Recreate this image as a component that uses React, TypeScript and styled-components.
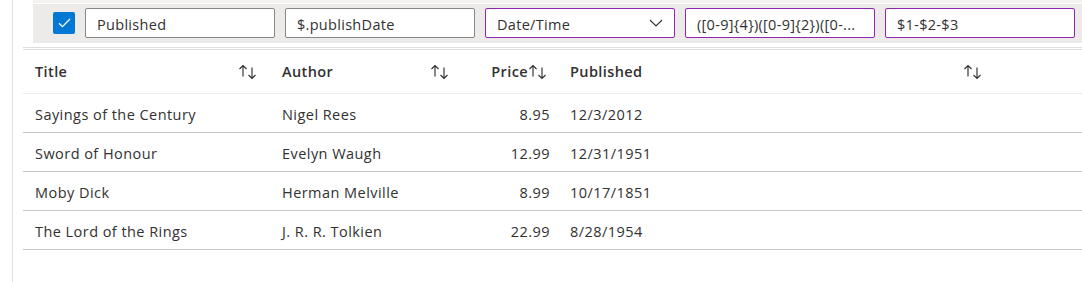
import React from 'react';
import styled, { createGlobalStyle } from 'styled-components';

const GlobalStyle = createGlobalStyle`
  body {
    margin: 0;
    background: #ffffff;
    font-family: 'Open Sans', 'Noto Sans', sans-serif;
    color: #323130;
  }
`;

type Book = { title: string; author: string; price: string; published: string };

const books: Book[] = [
  { title: 'Sayings of the Century', author: 'Nigel Rees', price: '8.95', published: '12/3/2012' },
  { title: 'Sword of Honour', author: 'Evelyn Waugh', price: '12.99', published: '12/31/1951' },
  { title: 'Moby Dick', author: 'Herman Melville', price: '8.99', published: '10/17/1851' },
  { title: 'The Lord of the Rings', author: 'J. R. R. Tolkien', price: '22.99', published: '8/28/1954' },
];

const SortIcon = () => (
  <svg width="20" height="16" viewBox="0 0 20 16" fill="none" stroke="#323130" strokeWidth="1.15">
    <path d="M5 1.5V12.5M1.5 5L5 1.5L8.5 5" />
    <path d="M14 3.5V14.5M10.5 11L14 14.5L17.5 11" />
  </svg>
);

const Chevron = () => (
  <svg width="14" height="8" viewBox="0 0 14 8" fill="none" stroke="#323130" strokeWidth="1.1">
    <path d="M1 1L7 7L13 1" />
  </svg>
);

const Check = () => (
  <svg width="13" height="10" viewBox="0 0 13 10" fill="none" stroke="#ffffff" strokeWidth="1.3">
    <path d="M1 5.2L4.4 8.6L12 1" />
  </svg>
);

const App: React.FC = () => {
  return (
    <Page>
      <GlobalStyle />
      <Gutter />
      <Content>
        <Toolbar>
          <CheckBox>
            <Check />
          </CheckBox>
          <Field>Published</Field>
          <Field>$.publishDate</Field>
          <Field accent>
            <span>Date/Time</span>
            <Chevron />
          </Field>
          <Field accent>([0-9]{'{4}'})([0-9]{'{2}'})([0-...</Field>
          <Field accent>$1-$2-$3</Field>
        </Toolbar>
        <Divider />
        <HeaderRow>
          <HeadCell>
            <span>Title</span>
            <SortIcon />
          </HeadCell>
          <HeadCell>
            <span>Author</span>
            <SortIcon />
          </HeadCell>
          <HeadCell numeric>
            <span>Price</span>
            <SortIcon />
          </HeadCell>
          <HeadCell>
            <span>Published</span>
            <SortIcon />
          </HeadCell>
          <div />
        </HeaderRow>
        {books.map((b) => (
          <Row key={b.title}>
            <Cell>{b.title}</Cell>
            <Cell>{b.author}</Cell>
            <Cell numeric>{b.price}</Cell>
            <Cell>{b.published}</Cell>
            <div />
          </Row>
        ))}
      </Content>
    </Page>
  );
};

const Page = styled.div`
  display: flex;
  height: 282px;
  overflow: hidden;
`;

const Gutter = styled.div`
  width: 12px;
  flex: none;
  border-right: 1px solid #e1dfdd;
`;

const Content = styled.div`
  flex: 1;
  padding-left: 10px;
  min-width: 0;
`;

const Toolbar = styled.div`
  display: flex;
  align-items: center;
  gap: 10px;
  height: 40px;
  margin-left: 10px;
  padding-left: 20px;
  background: #edebe9;
  border-top: 3px solid #f3f2f1;
  box-shadow: inset 0 1px 0 #ffffff;
`;

const CheckBox = styled.div`
  width: 22px;
  height: 22px;
  border-radius: 2px;
  background: #0078d4;
  display: flex;
  align-items: center;
  justify-content: center;
  flex: none;
`;

const Field = styled.div<{ accent?: boolean }>`
  box-sizing: border-box;
  width: 190px;
  height: 30px;
  flex: none;
  display: flex;
  align-items: center;
  justify-content: space-between;
  padding: 2px 11px 0;
  background: #ffffff;
  border: 1px solid ${(p) => (p.accent ? '#8f26ad' : '#8a8886')};
  border-radius: 2px;
  font-size: 14.5px;
  letter-spacing: 0.3px;
  color: #323130;
  white-space: nowrap;
  overflow: hidden;
  svg {
    margin-top: -2px;
  }
`;

const Divider = styled.div`
  height: 1px;
  margin-top: 4px;
  border-top: 1px solid #e1dfdd;
  border-bottom: 1px solid #e1dfdd;
`;

const columns = '247px 192px 96px 437px 1fr';

const HeaderRow = styled.div`
  display: grid;
  grid-template-columns: ${columns};
  height: 43px;
  border-bottom: 1px solid #edebe9;
`;

const HeadCell = styled.div<{ numeric?: boolean }>`
  display: flex;
  align-items: center;
  justify-content: ${(p) => (p.numeric ? 'flex-end' : 'space-between')};
  padding: ${(p) => (p.numeric ? '0 10px 0 12px' : '0 12px')};
  font-size: 14.5px;
  letter-spacing: 0.4px;
  font-weight: 600;
  color: #323130;
  svg {
    margin-top: 1px;
  }
`;

const Row = styled.div`
  display: grid;
  grid-template-columns: ${columns};
  height: 38px;
  border-bottom: 1px solid #c8c6c4;
`;

const Cell = styled.div<{ numeric?: boolean }>`
  display: flex;
  align-items: center;
  justify-content: ${(p) => (p.numeric ? 'flex-end' : 'flex-start')};
  padding: ${(p) => (p.numeric ? '2px 8px 0 12px' : '2px 12px 0')};
  font-size: 14.5px;
  letter-spacing: 0.45px;
  color: #323130;
  white-space: nowrap;
`;

export default App;
